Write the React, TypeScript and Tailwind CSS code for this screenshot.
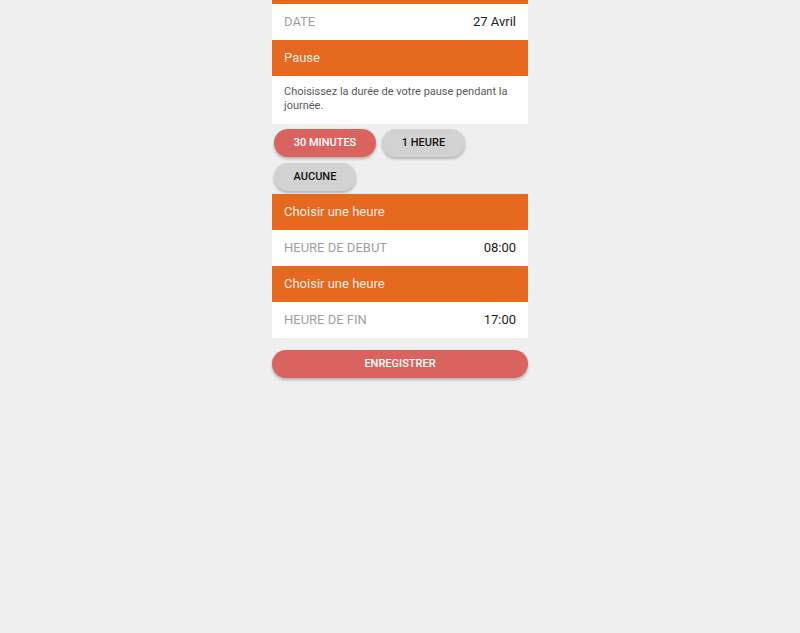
import React from "react";

const Header = ({ title }: { title: string }) => (
  <div className="h-9 bg-[#e5691f] flex items-center px-3 text-[13px] text-[#fdeee5]">
    {title}
  </div>
);

const Row = ({ label, value }: { label: string; value: string }) => (
  <div className="h-9 bg-white flex items-center justify-between px-3 text-[13px]">
    <span className="text-[#a0a0a0]">{label}</span>
    <span className="text-[#222]">{value}</span>
  </div>
);

const Pill = ({ label, active, w }: { label: string; active?: boolean; w: string }) => (
  <button
    className={`h-7 rounded-full text-[11px] font-medium shadow-[0_2px_3px_rgba(0,0,0,0.25)] ${w} ${
      active ? "bg-[#d9635f] text-white" : "bg-[#d2d2d2] text-[#111]"
    }`}
  >
    {label}
  </button>
);

export default function App() {
  return (
    <div className="w-[800px] h-[633px] bg-[#efefef] font-['Roboto',sans-serif]">
      <div className="w-64 mx-auto flex flex-col">
        <div className="h-1 bg-[#e5691f]" />
        <Row label="DATE" value="27 Avril" />
        <Header title="Pause" />
        <div className="bg-white px-3 pt-[9px] pb-[11px] h-12 text-[11px] leading-[14px] text-[#5a5a5a]">
          Choisissez la durée de votre pause pendant la journée.
        </div>
        <div className="flex flex-wrap gap-x-[6px] gap-y-[6px] px-[2px] pt-[5px] pb-[3px]">
          <Pill label="30 MINUTES" active w="w-[102px]" />
          <Pill label="1 HEURE" w="w-[83px]" />
          <Pill label="AUCUNE" w="w-[82px]" />
        </div>
        <Header title="Choisir une heure" />
        <Row label="HEURE DE DEBUT" value="08:00" />
        <Header title="Choisir une heure" />
        <Row label="HEURE DE FIN" value="17:00" />
        <button className="mt-[12px] h-7 rounded-full bg-[#d9635f] text-white text-[11px] font-medium shadow-[0_2px_3px_rgba(0,0,0,0.25)]">
          ENREGISTRER
        </button>
      </div>
    </div>
  );
}
